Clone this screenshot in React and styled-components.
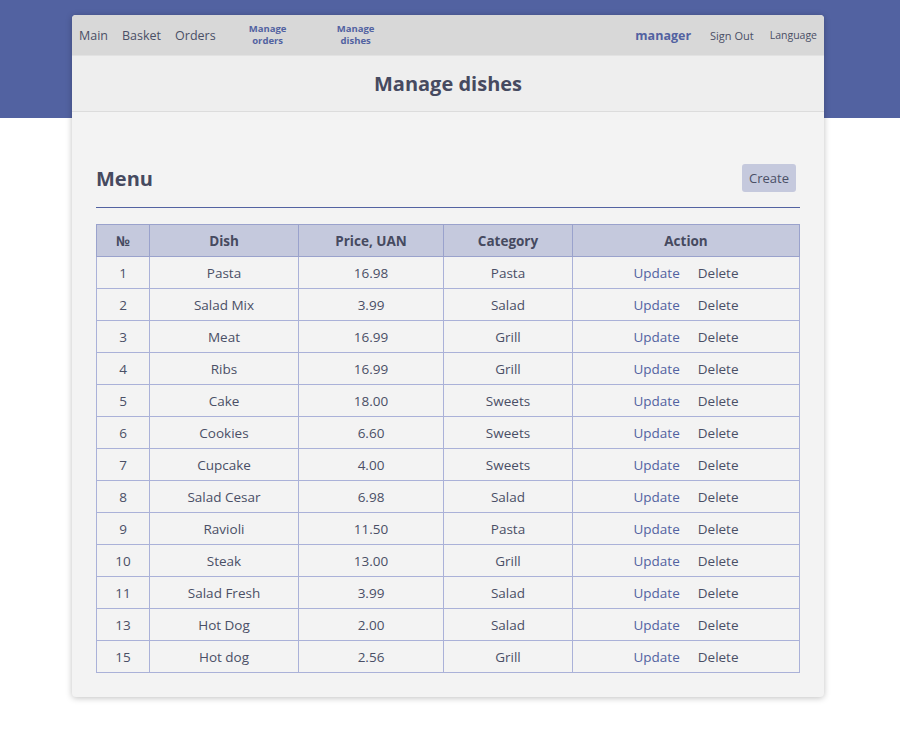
import React from 'react';
import styled, { createGlobalStyle } from 'styled-components';

const GlobalStyle = createGlobalStyle`
  body {
    margin: 0;
    background: #fff;
    font-family: 'Open Sans', 'Liberation Sans', sans-serif;
    color: #4a4f66;
  }
`;

const Page = styled.div`
  min-height: 750px;
  background: linear-gradient(#5262a1 0, #5262a1 118px, #fff 118px);
  padding-top: 15px;
  box-sizing: border-box;
`;

const Card = styled.div`
  width: 752px;
  margin-left: 72px;
  background: #f3f3f3;
  border-radius: 4px;
  box-shadow: 0 1px 6px rgba(0, 0, 0, 0.25);
  overflow: hidden;
`;

const NavBar = styled.nav`
  display: flex;
  align-items: center;
  height: 40px;
  background: #d8d8d8;
  padding: 0 7px;
`;

const NavLink = styled.a`
  font-size: 12.5px;
  color: #4a4f66;
  margin-right: ${p => p.$gap ?? 14}px;
  text-decoration: none;
`;

const NavSmall = styled.a`
  font-size: 9.5px;
  font-weight: 700;
  color: #5262a1;
  text-align: center;
  line-height: 12px;
  width: 80px;
  margin-left: ${p => p.$gap || 0}px;
  text-decoration: none;
`;

const Spacer = styled.div`
  flex: 1;
`;

const UserName = styled.span`
  font-size: 12.5px;
  font-weight: 700;
  color: #5262a1;
  margin-right: 19px;
`;

const NavRight = styled.a`
  font-size: ${p => p.$size || 10.5}px;
  color: #4a4f66;
  margin-left: ${p => p.$gap || 0}px;
  text-decoration: none;
`;

const TitleBar = styled.div`
  height: 55px;
  background: #eeeeee;
  border-top: 1px solid #e2e2e2;
  border-bottom: 1px solid #dcdcdc;
  display: flex;
  align-items: center;
  justify-content: center;
`;

const Title = styled.h1`
  margin: 0;
  font-size: 20px;
  font-weight: 700;
  color: #464a60;
`;

const Body = styled.div`
  padding: 52px 24px 24px;
`;

const MenuHead = styled.div`
  display: flex;
  align-items: center;
  justify-content: space-between;
  padding-bottom: 15px;
  border-bottom: 1px solid #5262a1;
  margin-bottom: 16px;
`;

const MenuTitle = styled.h2`
  margin: 0;
  font-size: 20px;
  font-weight: 700;
  color: #464a60;
`;

const CreateButton = styled.button`
  font-family: inherit;
  font-size: 13px;
  color: #4a4f66;
  background: #c5c9dd;
  border: none;
  border-radius: 3px;
  height: 28px;
  padding: 0 7px;
  margin-right: 4px;
`;

const Table = styled.table`
  width: 100%;
  table-layout: fixed;
  border-collapse: collapse;
  font-size: 13.5px;
  line-height: 16px;
`;

const Th = styled.th`
  background: #c5c9dd;
  font-weight: 700;
  height: 31px;
  padding: 0;
  border: 1px solid #9aa2cc;
  color: #464a60;
  width: ${p => (p.$w ? `${p.$w}px` : 'auto')};
`;

const Td = styled.td`
  text-align: center;
  height: 31px;
  padding: 0;
  border: 1px solid #aab1d8;
  color: #4a4f66;
`;

const ActionLink = styled.a`
  margin: 0 9px;
  color: #5262a1;
  cursor: pointer;
  &:last-child {
    color: #4a4f66;
  }
`;

const dishes = [
  [1, 'Pasta', '16.98', 'Pasta'],
  [2, 'Salad Mix', '3.99', 'Salad'],
  [3, 'Meat', '16.99', 'Grill'],
  [4, 'Ribs', '16.99', 'Grill'],
  [5, 'Cake', '18.00', 'Sweets'],
  [6, 'Cookies', '6.60', 'Sweets'],
  [7, 'Cupcake', '4.00', 'Sweets'],
  [8, 'Salad Cesar', '6.98', 'Salad'],
  [9, 'Ravioli', '11.50', 'Pasta'],
  [10, 'Steak', '13.00', 'Grill'],
  [11, 'Salad Fresh', '3.99', 'Salad'],
  [13, 'Hot Dog', '2.00', 'Salad'],
  [15, 'Hot dog', '2.56', 'Grill'],
];

const App = () => {
  return (
    <Page>
      <GlobalStyle />
      <Card>
        <NavBar>
          <NavLink>Main</NavLink>
          <NavLink>Basket</NavLink>
          <NavLink $gap={12}>Orders</NavLink>
          <NavSmall>Manage<br />orders</NavSmall>
          <NavSmall $gap={8}>Manage<br />dishes</NavSmall>
          <Spacer />
          <UserName>manager</UserName>
          <NavRight $size={11}>Sign Out</NavRight>
          <NavRight $size={10.5} $gap={16}>Language</NavRight>
        </NavBar>
        <TitleBar>
          <Title>Manage dishes</Title>
        </TitleBar>
        <Body>
          <MenuHead>
            <MenuTitle>Menu</MenuTitle>
            <CreateButton>Create</CreateButton>
          </MenuHead>
          <Table>
            <thead>
              <tr>
                <Th $w={52}>№</Th>
                <Th $w={148}>Dish</Th>
                <Th $w={144}>Price, UAN</Th>
                <Th $w={128}>Category</Th>
                <Th>Action</Th>
              </tr>
            </thead>
            <tbody>
              {dishes.map(d => (
                <tr key={d[0]}>
                  <Td>{d[0]}</Td>
                  <Td>{d[1]}</Td>
                  <Td>{d[2]}</Td>
                  <Td>{d[3]}</Td>
                  <Td>
                    <ActionLink>Update</ActionLink>
                    <ActionLink>Delete</ActionLink>
                  </Td>
                </tr>
              ))}
            </tbody>
          </Table>
        </Body>
      </Card>
    </Page>
  );
};

export default App;
